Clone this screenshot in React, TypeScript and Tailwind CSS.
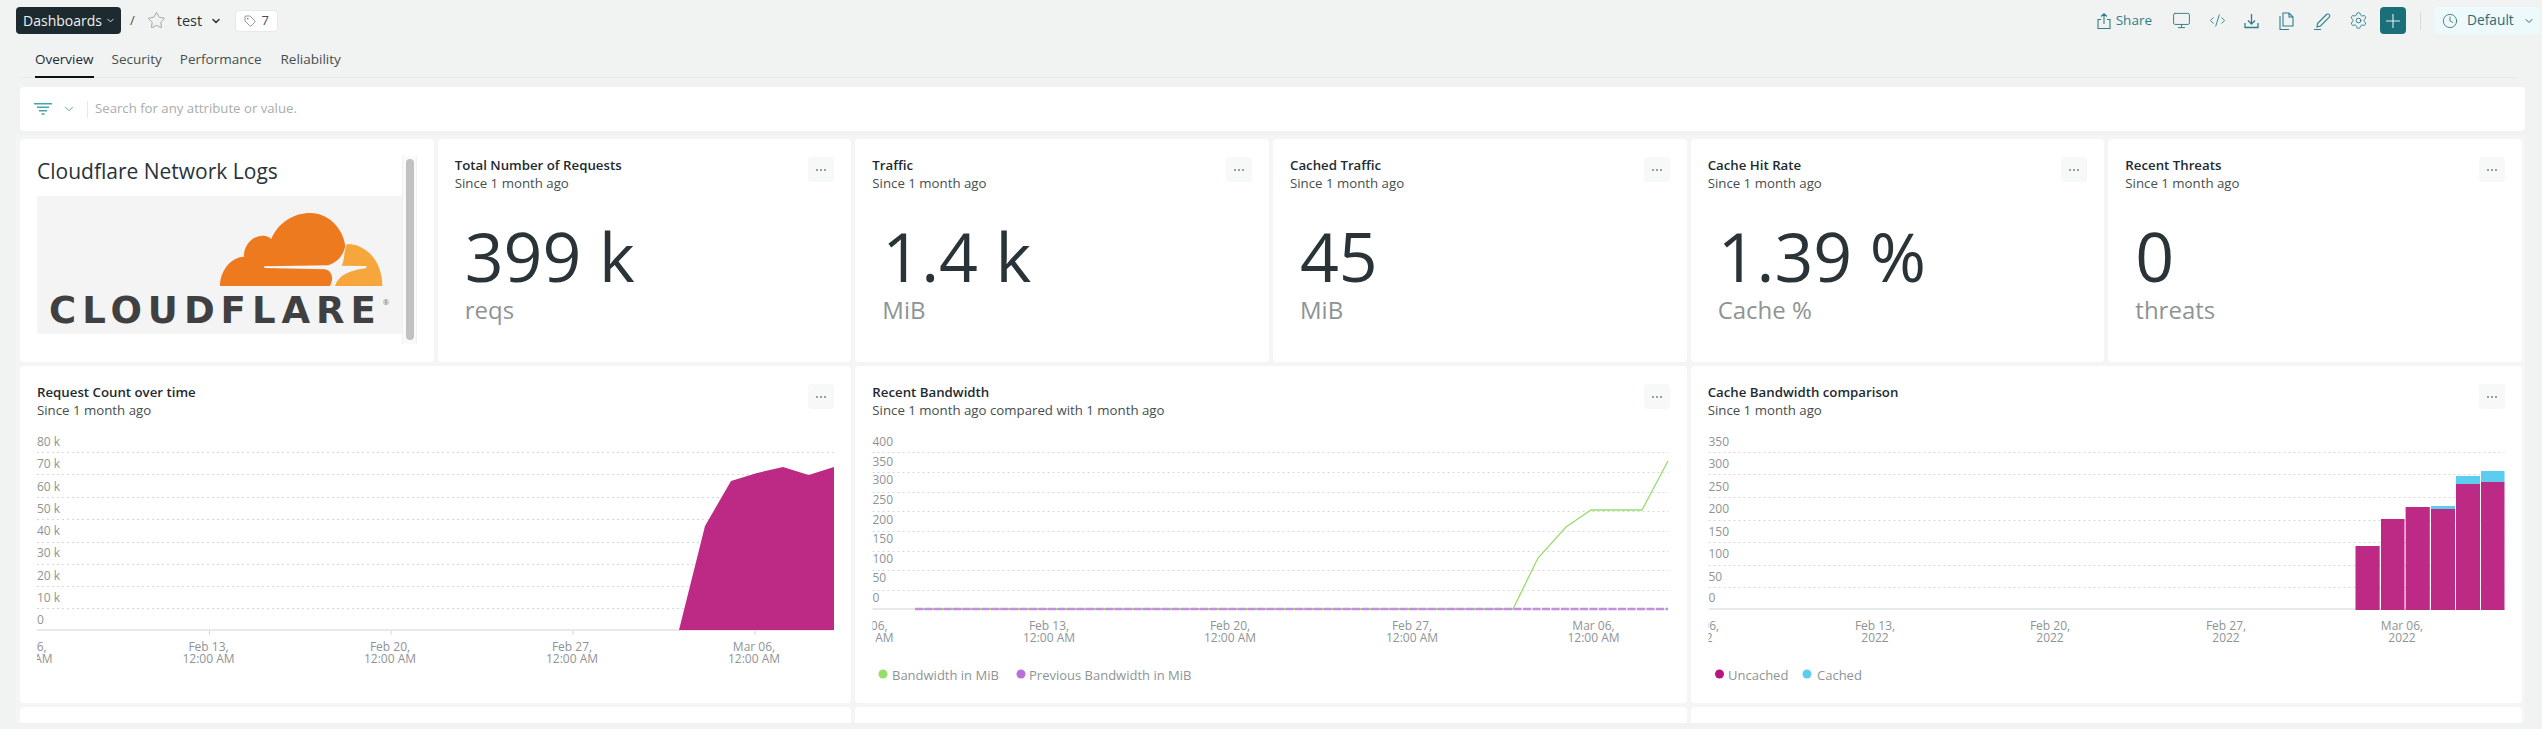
import React from 'react';
import { ChevronDown, Clock, CodeXml, Monitor, Settings, Star, Tag } from 'lucide-react';

const stats = [
  { title: 'Total Number of Requests', value: '399 k', unit: 'reqs' },
  { title: 'Traffic', value: '1.4 k', unit: 'MiB' },
  { title: 'Cached Traffic', value: '45', unit: 'MiB' },
  { title: 'Cache Hit Rate', value: '1.39 %', unit: 'Cache %' },
  { title: 'Recent Threats', value: '0', unit: 'threats' },
];

const MenuButton = () => (
  <div className="flex h-[25px] w-[26px] items-center justify-center rounded bg-[#f7f8f8]">
    <svg width="12" height="4" viewBox="0 0 12 4" className="fill-[#7d8586]">
      <circle cx="2" cy="2" r="1" />
      <circle cx="6" cy="2" r="1" />
      <circle cx="10" cy="2" r="1" />
    </svg>
  </div>
);

const CardHeader = ({ title, since = 'Since 1 month ago' }: { title: string; since?: string }) => (
  <div className="flex items-start justify-between pr-[17px]">
    <div>
      <div className="text-[13.25px] font-semibold leading-[18px] text-[#1d2a2f]">{title}</div>
      <div className="text-[13.25px] leading-[18px] text-[#464e4e]">{since}</div>
    </div>
    <div className="mt-[1px]">
      <MenuButton />
    </div>
  </div>
);

const StatCard = ({ title, value, unit }: { title: string; value: string; unit: string }) => (
  <div className="rounded bg-white pl-[17px] pt-[17px]">
    <CardHeader title={title} />
    <div className="ml-[10px] mt-[22px] text-[68px] font-normal leading-[84px] text-[#293338]">{value}</div>
    <div className="ml-[10px] mt-[-5px] text-[24px] leading-[34px] text-[#8e9494]">{unit}</div>
  </div>
);

const LogoCard = () => (
  <div className="flex rounded bg-white pl-[17px] pt-[18px]">
    <div className="w-[365px]">
      <div className="mb-[10px] h-[29px] text-[21px] leading-[29px] text-[#293338]">Cloudflare Network Logs</div>
      <div className="relative h-[138px] overflow-hidden bg-[#f4f4f4]">
        <svg width="365" height="90" viewBox="111 168 1095 270" className="block">
          <path
            fill="#ee7a20"
            d="M660 438 C660 395 690 352 732 350 C730 315 760 285 790 287 C800 287 808 292 814 297 C835 245 885 219 930 219 C990 219 1030 270 1036 318 C1030 345 1015 365 985 376 L793 379 L793 384 L975 388 C990 390 998 405 996 420 C995 428 992 434 990 438 Z"
          />
          <path
            fill="#f6a63a"
            d="M1041 312 C1100 312 1147 365 1147 438 L1005 438 C1015 410 1040 392 1098 385 L1100 378 L1025 377 C1035 360 1030 335 1041 312 Z"
          />
        </svg>
        <div className="absolute left-[12px] top-[93px] font-['DejaVu_Sans',sans-serif] text-[37px] font-bold leading-[44px] tracking-[6px] text-[#404041]">
          CLOUDFLARE
        </div>
        <div className="absolute left-[346px] top-[103px] text-[7px] leading-[8px] text-[#6b6b6b]">®</div>
      </div>
    </div>
    <div className="mt-[-1px] flex h-[188px] w-[15px] justify-center border-x border-[#f1f1f1] bg-[#fafafa] pt-[3px]">
      <div className="h-[181px] w-[8px] rounded bg-[#c1c1c1]" />
    </div>
  </div>
);

type ChartProps = {
  left: number;
  width: number;
  plotLeft: number;
  plotRight: number;
  grid: number[];
  baseline: number;
  yLabels: [string, number][];
  ticks: [string, number][];
  line2: string;
  children: React.ReactNode;
  id: string;
  labelTop: number;
  legend?: [string, number, string, number][];
};

const Chart = ({ left, width, plotLeft, plotRight, grid, baseline, yLabels, ticks, line2, children, id, labelTop, legend }: ChartProps) => (
  <svg width={width} height="260" viewBox={`${left} 430 ${width} 260`} className="block font-['Open_Sans',sans-serif]">
    <defs>
      <clipPath id={id}>
        <rect x={plotLeft} y="620" width={plotRight - plotLeft} height="50" />
      </clipPath>
    </defs>
    {grid.map((y) => (
      <line key={y} x1={plotLeft} x2={plotRight} y1={y + 0.5} y2={y + 0.5} stroke="#d5d8d8" strokeWidth="1" strokeDasharray="2 3" />
    ))}
    {yLabels.map(([label, y]) => (
      <text key={label} x={plotLeft} y={y + 4} fontSize="12" fill="#8e9494">
        {label}
      </text>
    ))}
    <line x1={plotLeft} x2={plotRight} y1={baseline} y2={baseline} stroke="#e8eaea" strokeWidth="2" />
    {ticks.map(([label, x], i) => (
      <g key={label} clipPath={`url(#${id})`}>
        {i > 0 && <line x1={x} x2={x} y1={baseline + 1} y2={baseline + 5} stroke="#d5d8d8" />}
        <text x={x - 1} y={labelTop} fontSize="12" fill="#8e9494" textAnchor="middle">
          {label}
        </text>
        <text x={x - 1} y={labelTop + 12} fontSize="12" fill="#8e9494" textAnchor="middle">
          {line2}
        </text>
      </g>
    ))}
    {children}
    {legend?.map(([label, dotX, color, textX]) => (
      <g key={label}>
        <circle cx={dotX} cy="674" r="4.5" fill={color} />
        <text x={textX} y="680" fontSize="13" fill="#8e9494">
          {label}
        </text>
      </g>
    ))}
  </svg>
);

const ChartCard = ({ title, since, children }: { title: string; since?: string; children: React.ReactNode }) => (
  <div className="col-span-2 overflow-hidden rounded bg-white">
    <div className="h-[64px] pl-[17px] pt-[17px]">
      <CardHeader title={title} since={since} />
    </div>
    {children}
  </div>
);

const bars = [
  { x: 2354.5, w: 24.2, top: 546 },
  { x: 2380, w: 23.5, top: 519 },
  { x: 2404.6, w: 24.2, top: 507 },
  { x: 2430, w: 24, top: 509, cached: 506 },
  { x: 2455, w: 24, top: 484, cached: 476 },
  { x: 2480, w: 23.5, top: 482, cached: 471 },
];

export default function App() {
  return (
    <div className="h-[729px] w-[2542px] overflow-hidden bg-[#f1f3f3] font-['Open_Sans',sans-serif]">
      {/* Header */}
      <div className="flex h-[41px] items-center pl-4 pr-[2px]">
        <div className="flex h-[27px] w-[105px] items-center justify-center gap-[3px] rounded bg-[#1d2a2f] pl-[2px] text-[14px] text-[#eef1f1]">
          Dashboards
          <ChevronDown size={11} strokeWidth={2} />
        </div>
        <span className="ml-[9px] text-[13px] text-[#464e4e]">/</span>
        <Star size={19} strokeWidth={1} className="ml-[12px] text-[#8a9090]" />
        <span className="ml-[11px] text-[14.5px] text-[#293338]">test</span>
        <ChevronDown size={12} strokeWidth={3} className="ml-[8px] text-[#293338]" />
        <div className="ml-[13px] flex h-[22px] w-[43px] items-center justify-center gap-[5px] rounded border border-[#e7e9e9] bg-white text-[13px] text-[#464e4e]">
          <Tag size={12} strokeWidth={1.2} />7
        </div>
        <div className="ml-auto flex items-center text-[#2c7f8a]">
          <svg width="14" height="16" viewBox="0 0 14 16" fill="none" stroke="currentColor" strokeWidth="1.1">
            <path d="M4 6.5H1v9h12v-9h-3M7 11V1M4 3.5 7 .8l3 2.7" />
          </svg>
          <span className="ml-[5px] text-[13.5px]">Share</span>
          <Monitor size={19} strokeWidth={1.2} className="ml-[20px]" />
          <CodeXml size={17} strokeWidth={1.3} className="ml-[18px]" />
          <svg width="15" height="16" viewBox="0 0 15 16" fill="none" stroke="currentColor" strokeWidth="1.3" className="ml-[18px]">
            <path d="M1 10v4.5h13V10M7.5 1v10M4 7.5l3.5 3.5L11 7.5" />
          </svg>
          <svg width="15" height="18" viewBox="0 0 15 18" fill="none" stroke="currentColor" strokeWidth="1.1" className="ml-[20px]">
            <path d="M4 1h6l4 4v9H4zM10 1v4h4M1 4v13.5h9" />
          </svg>
          <svg width="18" height="18" viewBox="0 0 18 18" fill="none" stroke="currentColor" strokeWidth="1.1" className="ml-[20px]">
            <path d="M3.5 11.5 12.5 2.5c1-1 2.5-.5 3 .5s.3 1.6-.3 2.2L6.5 14l-3.5 1zM0 17.5h7" />
          </svg>
          <Settings size={19} strokeWidth={1.2} className="ml-[17px]" />
          <div className="ml-[12px] flex h-[27px] w-[26px] items-center justify-center rounded bg-[#1a6f78]">
            <svg width="14" height="14" viewBox="0 0 14 14" stroke="#dff0f2" strokeWidth="1.1">
              <path d="M7 0v14M0 7h14" />
            </svg>
          </div>
          <div className="ml-[14px] h-[18px] w-px bg-[#d9dcdc]" />
          <div className="ml-[13px] flex h-[27px] w-[106px] items-center rounded bg-[#eef9fb] pl-[8px] text-[#2a6b75]">
            <Clock size={16} strokeWidth={1.2} />
            <span className="ml-[9px] text-[13.75px]">Default</span>
            <ChevronDown size={12} strokeWidth={2} className="ml-[9px]" />
          </div>
        </div>
      </div>

      {/* Tabs */}
      <div className="ml-5 mr-[24px] flex h-[37px] items-end border-b border-[#e8eaea] pl-[15px] text-[13.5px] text-[#464e4e]">
        <div className="mb-[-1px] flex h-[36px] items-center border-b-2 border-[#0b1213] text-[#1d2a2f]">Overview</div>
        <div className="ml-[18px] flex h-[36px] items-center">Security</div>
        <div className="ml-[18px] flex h-[36px] items-center">Performance</div>
        <div className="ml-[19px] flex h-[36px] items-center">Reliability</div>
      </div>

      {/* Filter bar */}
      <div className="ml-5 mr-[17px] mt-[9px] flex h-[44px] items-center rounded-sm bg-white pl-[14px]">
        <svg width="18" height="12" viewBox="0 0 18 12" fill="#4aa3ac">
          <rect width="18" height="1.5" />
          <rect x="3" y="3.5" width="12" height="1.5" />
          <rect x="5" y="7" width="8" height="1.5" />
          <rect x="7.5" y="10.3" width="3" height="1.5" />
        </svg>
        <ChevronDown size={14} strokeWidth={1.6} className="ml-[10px] text-[#4aa3ac]" />
        <div className="ml-[11px] h-[17px] w-px bg-[#e6e8e8]" />
        <span className="ml-[7px] text-[13.2px] text-[#a9adad]">Search for any attribute or value.</span>
      </div>

      {/* Panels */}
      <div className="ml-4 mr-[17px] mt-[4px] h-[588px] overflow-hidden bg-[#f4f5f5] pl-1 pr-[3px] pt-1">
        <div className="grid grid-cols-6 grid-rows-[223px_337px_60px] gap-1">
          <LogoCard />
          {stats.map((s) => (
            <StatCard key={s.title} {...s} />
          ))}

          <ChartCard title="Request Count over time">
            <Chart
              id="c1"
              left={20}
              width={832}
              plotLeft={37}
              plotRight={834}
              grid={[452, 474, 497, 519, 542, 564, 586, 608]}
              baseline={630}
              yLabels={[['80 k', 442], ['70 k', 464], ['60 k', 487], ['50 k', 509], ['40 k', 531], ['30 k', 553], ['20 k', 576], ['10 k', 598], ['0', 620]]}
              ticks={[['Feb 06,', 27.5], ['Feb 13,', 209.5], ['Feb 20,', 391], ['Feb 27,', 573], ['Mar 06,', 755]]}
              line2="12:00 AM"
              labelTop={651}
            >
              <path d="M679 630 L705 526 L731 481 L757 473 L783 467 L808.6 475 L834 467 L834 630 Z" fill="#bc2a85" />
            </Chart>
          </ChartCard>

          <ChartCard title="Recent Bandwidth" since="Since 1 month ago compared with 1 month ago">
            <Chart
              id="c2"
              left={855}
              width={832}
              plotLeft={872.5}
              plotRight={1668.5}
              grid={[452, 472, 492, 511, 531, 551, 570, 590]}
              baseline={609}
              yLabels={[['400', 442], ['350', 462], ['300', 480], ['250', 500], ['200', 520], ['150', 539], ['100', 559], ['50', 578], ['0', 598]]}
              ticks={[['Feb 06,', 868.5], ['Feb 13,', 1050], ['Feb 20,', 1231], ['Feb 27,', 1413], ['Mar 06,', 1594.5]]}
              line2="12:00 AM"
              labelTop={630}
              legend={[['Bandwidth in MiB', 883, '#97dd6e', 892], ['Previous Bandwidth in MiB', 1021, '#b96fd8', 1029]]}
            >
              <line x1="915" x2="1513" y1="609" y2="609" stroke="#97dd6e" strokeWidth="2" />
              <line x1="915" x2="1668" y1="609" y2="609" stroke="#c58fe0" strokeWidth="2.4" strokeDasharray="8 1.5" />
              <path d="M1513 609 L1538 558 L1566 527 L1591 510 L1642 510 L1668 461" fill="none" stroke="#97dd6e" strokeWidth="1.3" />
            </Chart>
          </ChartCard>

          <ChartCard title="Cache Bandwidth comparison">
            <Chart
              id="c3"
              left={1690}
              width={832}
              plotLeft={1707.5}
              plotRight={2503.5}
              grid={[452, 474, 497, 520, 542, 565, 587]}
              baseline={609}
              yLabels={[['350', 442], ['300', 464], ['250', 487], ['200', 509], ['150', 532], ['100', 554], ['50', 577], ['0', 598]]}
              ticks={[['Feb 06,', 1699], ['Feb 13,', 1875], ['Feb 20,', 2050], ['Feb 27,', 2226], ['Mar 06,', 2402]]}
              line2="2022"
              labelTop={630}
              legend={[['Uncached', 1718.5, '#b8157f', 1727], ['Cached', 1806, '#5ccdee', 1816]]}
            >
              {bars.map((b) => (
                <g key={b.x}>
                  {b.cached && <rect x={b.x} y={b.cached} width={b.w} height={b.top - b.cached} fill="#5ccdee" />}
                  <rect x={b.x} y={b.top} width={b.w} height={610 - b.top} fill="#bc2a85" />
                </g>
              ))}
            </Chart>
          </ChartCard>

          <div className="col-span-2 rounded-t bg-white" />
          <div className="col-span-2 rounded-t bg-white" />
          <div className="col-span-2 rounded-t bg-white" />
        </div>
      </div>
    </div>
  );
}
